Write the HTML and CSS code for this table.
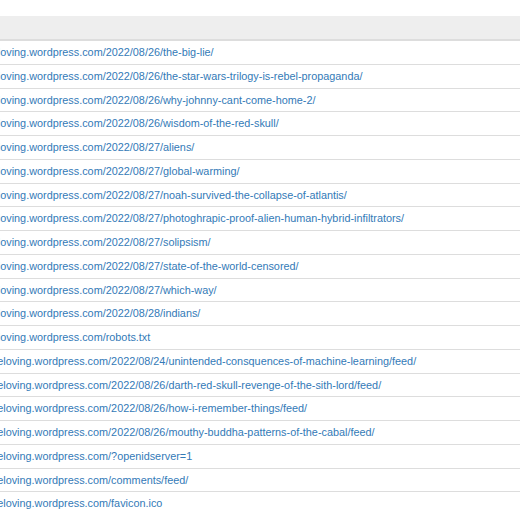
FILE: index.html
```html
<!DOCTYPE html>
<html>
<head>
<meta charset="utf-8">
<link rel="stylesheet" href="styles.css">
</head>
<body>
<div class="page">
<table class="urls">
<thead><tr><th>URL</th></tr></thead>
<tbody>
<tr><td><a href="#">http://trueloving.wordpress.com/2022/08/26/the-big-lie/</a></td></tr>
<tr><td><a href="#">http://trueloving.wordpress.com/2022/08/26/the-star-wars-trilogy-is-rebel-propaganda/</a></td></tr>
<tr><td><a href="#">http://trueloving.wordpress.com/2022/08/26/why-johnny-cant-come-home-2/</a></td></tr>
<tr><td><a href="#">http://trueloving.wordpress.com/2022/08/26/wisdom-of-the-red-skull/</a></td></tr>
<tr><td><a href="#">http://trueloving.wordpress.com/2022/08/27/aliens/</a></td></tr>
<tr><td><a href="#">http://trueloving.wordpress.com/2022/08/27/global-warming/</a></td></tr>
<tr><td><a href="#">http://trueloving.wordpress.com/2022/08/27/noah-survived-the-collapse-of-atlantis/</a></td></tr>
<tr><td><a href="#">http://trueloving.wordpress.com/2022/08/27/photoghrapic-proof-alien-human-hybrid-infiltrators/</a></td></tr>
<tr><td><a href="#">http://trueloving.wordpress.com/2022/08/27/solipsism/</a></td></tr>
<tr><td><a href="#">http://trueloving.wordpress.com/2022/08/27/state-of-the-world-censored/</a></td></tr>
<tr><td><a href="#">http://trueloving.wordpress.com/2022/08/27/which-way/</a></td></tr>
<tr><td><a href="#">http://trueloving.wordpress.com/2022/08/28/indians/</a></td></tr>
<tr><td><a href="#">http://trueloving.wordpress.com/robots.txt</a></td></tr>
<tr><td><a href="#">https://trueloving.wordpress.com/2022/08/24/unintended-consquences-of-machine-learning/feed/</a></td></tr>
<tr><td><a href="#">https://trueloving.wordpress.com/2022/08/26/darth-red-skull-revenge-of-the-sith-lord/feed/</a></td></tr>
<tr><td><a href="#">https://trueloving.wordpress.com/2022/08/26/how-i-remember-things/feed/</a></td></tr>
<tr><td><a href="#">https://trueloving.wordpress.com/2022/08/26/mouthy-buddha-patterns-of-the-cabal/feed/</a></td></tr>
<tr><td><a href="#">https://trueloving.wordpress.com/?openidserver=1</a></td></tr>
<tr><td><a href="#">https://trueloving.wordpress.com/comments/feed/</a></td></tr>
<tr><td><a href="#">https://trueloving.wordpress.com/favicon.ico</a></td></tr>
</tbody>
</table>
</div>
</body>
</html>
```
FILE: styles.css
```css
html, body {
  margin: 0;
  padding: 0;
  background: #fff;
  overflow: hidden;
}
.page {
  padding-top: 16px;
  width: 520px;
  overflow: hidden;
}
.urls {
  border-collapse: collapse;
  margin-left: -53px;
  width: 600px;
  font-family: "Liberation Sans", Arial, sans-serif;
  font-size: 10.85px;
}
.urls th {
  background: #eeeeee;
  color: transparent;
  text-align: left;
  padding: 5px;
  line-height: 13px;
  border-bottom: 2px solid #dddddd;
}
.urls td {
  padding: 5px;
  line-height: 12.75px;
  border-top: 1px solid #dddddd;
  white-space: nowrap;
}
.urls a {
  color: #337ab7;
  text-decoration: none;
}
```
